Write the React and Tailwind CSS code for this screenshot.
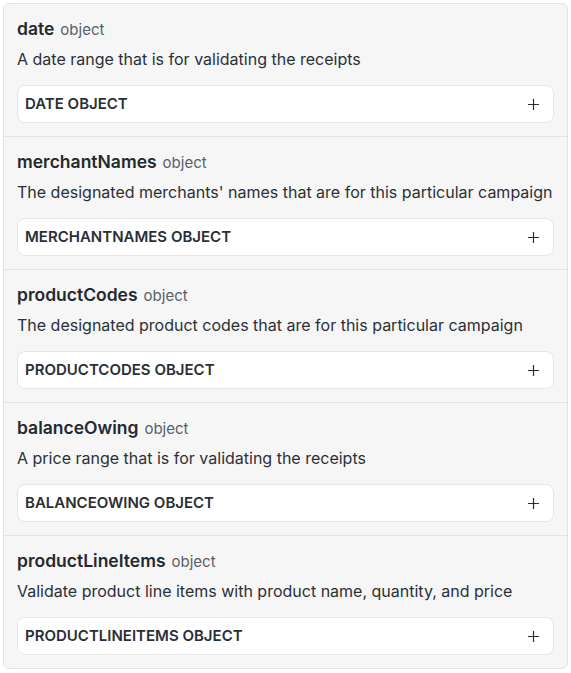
import React from 'react';

const fields = [
  { name: 'date', desc: 'A date range that is for validating the receipts' },
  { name: 'merchantNames', desc: "The designated merchants' names that are for this particular campaign" },
  { name: 'productCodes', desc: 'The designated product codes that are for this particular campaign' },
  { name: 'balanceOwing', desc: 'A price range that is for validating the receipts' },
  { name: 'productLineItems', desc: 'Validate product line items with product name, quantity, and price' },
];

const PlusIcon = () => (
  <svg width="11" height="11" viewBox="0 0 11 11" fill="none" stroke="#2a2f35" strokeWidth="1.2">
    <path d="M5.5 0v11M0 5.5h11" />
  </svg>
);

const App = () => {
  return (
    <div className="w-[571px] h-[673px] bg-white p-[3px] font-['Inter','Liberation_Sans',sans-serif]">
      <div className="w-[565px] rounded-md border border-[#e3e3e3] bg-[#f6f6f6] overflow-hidden">
        {fields.map((f, i) => (
          <div
            key={f.name}
            className={`px-[13px] pt-[13px] pb-[13px] ${i > 0 ? 'border-t border-[#e3e3e3]' : ''}`}
          >
            {/* title */}
            <div className="flex items-baseline gap-[6px] h-[24px]">
              <span className="text-[17.5px] font-semibold text-[#24292f] leading-[24px]">{f.name}</span>
              <span className="text-[15px] text-[#57606a] leading-[24px]">object</span>
            </div>
            <p className="mt-[6px] text-[16px] text-[#2b3036] leading-[24px] whitespace-nowrap">{f.desc}</p>
            <div className="mt-[14px] h-[38px] flex items-center justify-between bg-white border border-[#e6e6e6] rounded-lg pl-[7px] pr-[14px]">
              <span className="text-[15px] font-semibold uppercase text-[#2a2f35]">
                {f.name} object
              </span>
              <PlusIcon />
            </div>
          </div>
        ))}
      </div>
    </div>
  );
};

export default App;
